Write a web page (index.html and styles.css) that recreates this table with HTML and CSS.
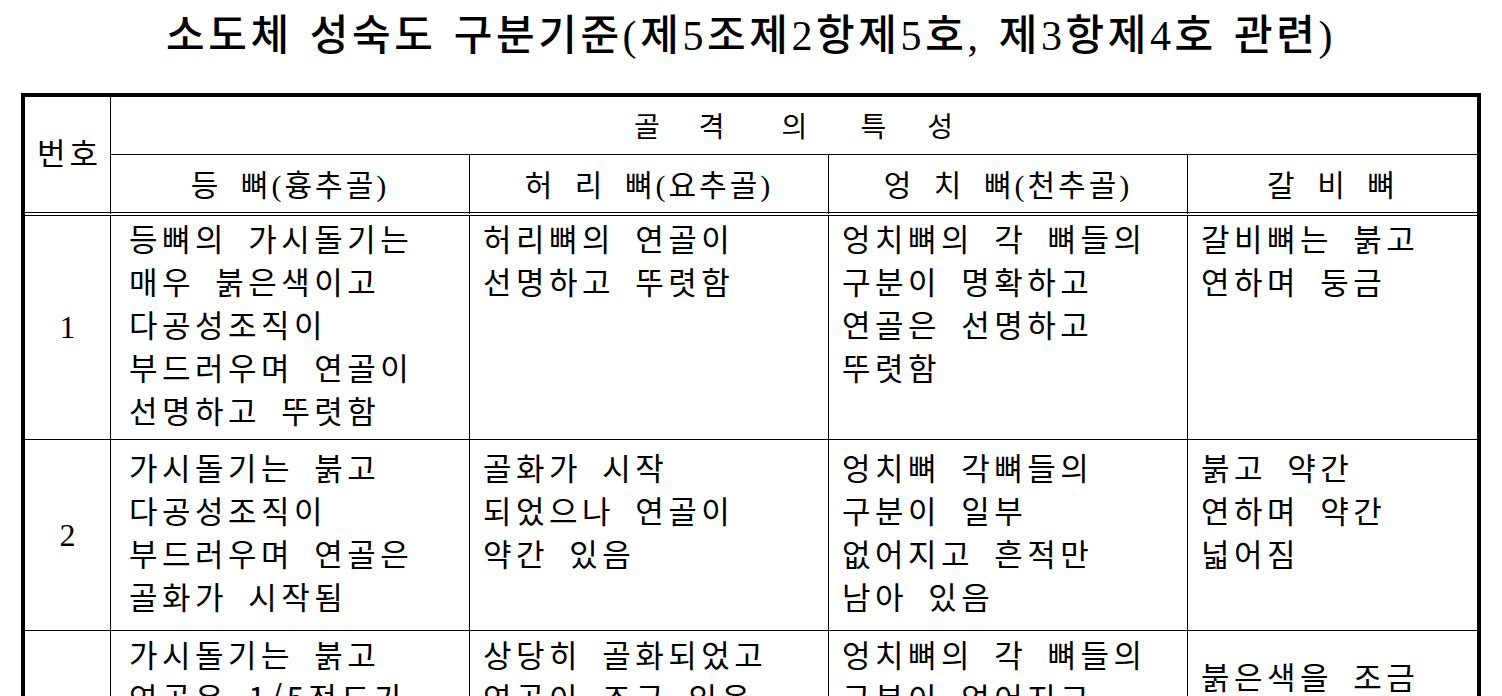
FILE: index.html
```html
<!DOCTYPE html>
<html lang="ko">
<head>
<meta charset="utf-8">
<title>소도체 성숙도 구분기준</title>
<link rel="stylesheet" href="styles.css">
</head>
<body>
<h1 class="title">소도체 성숙도 구분기준(제5조제2항제5호, 제3항제4호 관련)</h1>
<div class="sheet">
  <div class="cell hd no">번호</div>
  <div class="cell hd group"><span>골</span><span class="gap1">격</span><span class="gap2">의</span><span class="gap3">특</span><span class="gap4">성</span></div>
  <div class="cell hd sub">등 뼈(흉추골)</div>
  <div class="cell hd sub">허 리 뼈(요추골)</div>
  <div class="cell hd sub">엉 치 뼈(천추골)</div>
  <div class="cell hd sub last">갈 비 뼈</div>

  <div class="cell num">1</div>
  <div class="cell txt r1 c1">등뼈의 가시돌기는<br>매우 붉은색이고<br>다공성조직이<br>부드러우며 연골이<br>선명하고 뚜렷함</div>
  <div class="cell txt r1">허리뼈의 연골이<br>선명하고 뚜렷함</div>
  <div class="cell txt r1">엉치뼈의 각 뼈들의<br>구분이 명확하고<br>연골은 선명하고<br>뚜렷함</div>
  <div class="cell txt r1 last">갈비뼈는 붉고<br>연하며 둥금</div>

  <div class="cell num">2</div>
  <div class="cell txt r2 c1">가시돌기는 붉고<br>다공성조직이<br>부드러우며 연골은<br>골화가 시작됨</div>
  <div class="cell txt r2">골화가 시작<br>되었으나 연골이<br>약간 있음</div>
  <div class="cell txt r2">엉치뼈 각뼈들의<br>구분이 일부<br>없어지고 흔적만<br>남아 있음</div>
  <div class="cell txt r2 last">붉고 약간<br>연하며 약간<br>넓어짐</div>

  <div class="cell num">3</div>
  <div class="cell txt r3 c1">가시돌기는 붉고<br>연골은 1/5정도가<br>남아 있음</div>
  <div class="cell txt r3">상당히 골화되었고<br>연골이 조금 있음</div>
  <div class="cell txt r3">엉치뼈의 각 뼈들의<br>구분이 없어지고<br>하나로 붙음</div>
  <div class="cell txt r3 mid last">붉은색을 조금<br>띠고 있음</div>
</div>
</body>
</html>
```

FILE: styles.css
```css
html, body {
  margin: 0;
  padding: 0;
  background: #ffffff;
  color: #000000;
}

body {
  font-family: "Noto Sans CJK KR", "Noto Sans", sans-serif;
}

.title {
  margin: 0 0 21px 0;
  height: 72px;
  line-height: 72px;
  text-align: center;
  font-family: "Liberation Serif", "Noto Sans CJK KR", serif;
  font-size: 42px;
  font-weight: 500;
  letter-spacing: 3.6px;
  word-spacing: 3px;
  white-space: nowrap;
}

.sheet {
  margin-left: 21px;
  width: 1452px;
  border: 4px solid #000;
  display: grid;
  grid-template-columns: 86px 359px 359px 359px 289px;
  grid-template-rows: 58px 61px 224px 191px 320px;
}

.cell {
  box-sizing: border-box;
  border-right: 1px solid #000;
  border-bottom: 1px solid #000;
  white-space: nowrap;
}

.cell.last,
.cell.group {
  border-right: none;
}

.hd {
  display: flex;
  align-items: center;
  justify-content: center;
  font-family: "Liberation Serif", "Noto Sans CJK KR", serif;
  font-size: 30px;
  letter-spacing: 3px;
  word-spacing: 9px;
}

.no {
  grid-row: span 2;
  border-bottom: 4px double #000;
  padding-bottom: 6px;
  font-size: 31px;
  letter-spacing: 4px;
  padding-left: 4px;
}

.group {
  grid-column: span 4;
  padding-bottom: 2px;
  font-size: 28px;
  letter-spacing: 1px;
}

.gap1 { margin-left: 38px; }
.gap2 { margin-left: 56px; }
.gap3 { margin-left: 52px; }
.gap4 { margin-left: 40px; }

.sub {
  border-bottom: 4px double #000;
  padding-bottom: 2px;
}

.num {
  display: flex;
  align-items: center;
  justify-content: center;
  font-family: "Liberation Serif", serif;
  font-size: 32px;
}

.txt {
  font-size: 31px;
  line-height: 43px;
  letter-spacing: 4.5px;
  word-spacing: 7px;
  padding-left: 13px;
}

.txt.c1 {
  padding-left: 18px;
}

.r1 { padding-top: 0; }
.r2 { padding-top: 5px; }
.r3 { padding-top: 1px; }
.r3.mid { padding-top: 23px; }
```
